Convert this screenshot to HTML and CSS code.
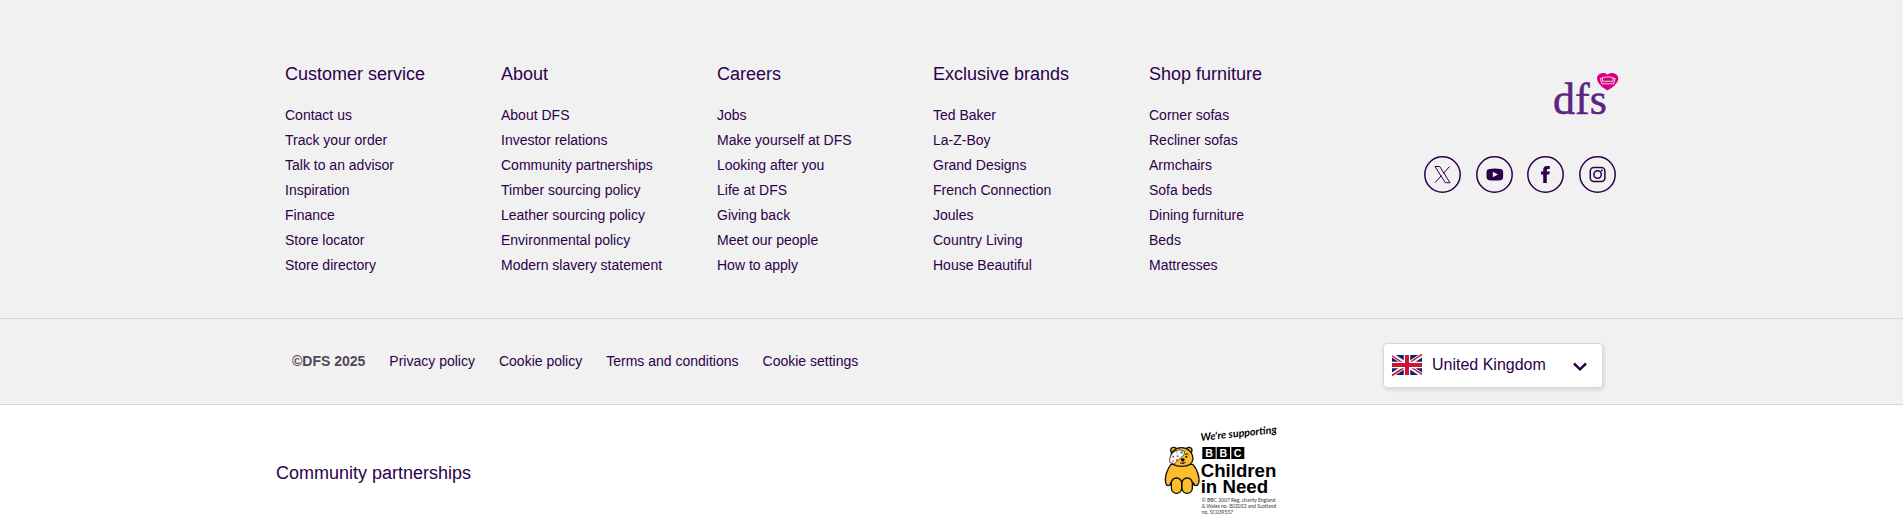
FILE: index.html
```html
<!DOCTYPE html>
<html lang="en-GB">
<head>
<meta charset="utf-8">
<meta name="viewport" content="width=device-width, initial-scale=1">
<title>DFS footer</title>
<link rel="stylesheet" href="styles.css">
</head>
<body>
<footer class="footer">
  <div class="container footer-main">
    <nav class="link-group" aria-labelledby="g1">
      <h2 class="title" id="g1">Customer service</h2>
      <ul class="links">
        <li><a href="#">Contact us</a></li>
        <li><a href="#">Track your order</a></li>
        <li><a href="#">Talk to an advisor</a></li>
        <li><a href="#">Inspiration</a></li>
        <li><a href="#">Finance</a></li>
        <li><a href="#">Store locator</a></li>
        <li><a href="#">Store directory</a></li>
      </ul>
    </nav>
    <nav class="link-group" aria-labelledby="g2">
      <h2 class="title" id="g2">About</h2>
      <ul class="links">
        <li><a href="#">About DFS</a></li>
        <li><a href="#">Investor relations</a></li>
        <li><a href="#">Community partnerships</a></li>
        <li><a href="#">Timber sourcing policy</a></li>
        <li><a href="#">Leather sourcing policy</a></li>
        <li><a href="#">Environmental policy</a></li>
        <li><a href="#">Modern slavery statement</a></li>
      </ul>
    </nav>
    <nav class="link-group" aria-labelledby="g3">
      <h2 class="title" id="g3">Careers</h2>
      <ul class="links">
        <li><a href="#">Jobs</a></li>
        <li><a href="#">Make yourself at DFS</a></li>
        <li><a href="#">Looking after you</a></li>
        <li><a href="#">Life at DFS</a></li>
        <li><a href="#">Giving back</a></li>
        <li><a href="#">Meet our people</a></li>
        <li><a href="#">How to apply</a></li>
      </ul>
    </nav>
    <nav class="link-group" aria-labelledby="g4">
      <h2 class="title" id="g4">Exclusive brands</h2>
      <ul class="links">
        <li><a href="#">Ted Baker</a></li>
        <li><a href="#">La-Z-Boy</a></li>
        <li><a href="#">Grand Designs</a></li>
        <li><a href="#">French Connection</a></li>
        <li><a href="#">Joules</a></li>
        <li><a href="#">Country Living</a></li>
        <li><a href="#">House Beautiful</a></li>
      </ul>
    </nav>
    <nav class="link-group" aria-labelledby="g5">
      <h2 class="title" id="g5">Shop furniture</h2>
      <ul class="links">
        <li><a href="#">Corner sofas</a></li>
        <li><a href="#">Recliner sofas</a></li>
        <li><a href="#">Armchairs</a></li>
        <li><a href="#">Sofa beds</a></li>
        <li><a href="#">Dining furniture</a></li>
        <li><a href="#">Beds</a></li>
        <li><a href="#">Mattresses</a></li>
      </ul>
    </nav>
    <div class="brand">
      <a class="logo" href="#" aria-label="DFS home">
        <svg width="66" height="44" viewBox="0 0 66 44">
          <text class="logo-text" x="0" y="41">dfs</text>
          <path class="heart" d="M54.500 17.500C51 15.500 44 10.500 44 5.500C44 .5 51-1.800 54.500 1.800C58-1.800 65.300.5 65.300 5.500C65.300 10.500 58 15.500 54.500 17.500Z"/>
          <path class="sofa" d="M49.500 4.500Q54.700 3.200 60 4.500V8.300H49.500ZM49.500 5.500H47.300L48.800 10.800H60.700L62.200 5.500H60"/>
        </svg>
      </a>
      <div class="social">
        <a href="#" aria-label="X">
          <svg viewBox="0 0 37 37">
            <circle class="line" cx="18.500" cy="18.500" r="17.700"/>
            <path class="thin" d="M11 10.500H15.700L26 26.700H21.300ZM25.500 10.500L19.400 17.500M17.400 19.500L11 26.700"/>
          </svg>
        </a>
        <a href="#" aria-label="YouTube">
          <svg viewBox="0 0 37 37">
            <circle class="line" cx="18.500" cy="18.500" r="17.700"/>
            <path fill-rule="evenodd" d="M13.500 12.900Q18.700 12.300 24.300 12.900Q27 13 27.100 15.800Q27.500 18.500 27.100 21.300Q27 24 24.300 24.200Q18.700 24.800 13.500 24.200Q10.700 24 10.600 21.300Q10.200 18.500 10.600 15.800Q10.700 13 13.500 12.900ZM16.800 15.700V21.300L22 18.500Z"/>
          </svg>
        </a>
        <a href="#" aria-label="Facebook">
          <svg viewBox="0 0 37 37">
            <circle class="line" cx="18.500" cy="18.500" r="17.700"/>
            <path d="M16.200 27V18.600H14V15.600H16.200V13.800Q16.200 9.900 20 9.900H22.800V13H21.200Q19.800 13 19.800 14.300V15.600H22.800L22.300 18.600H19.800V27Z"/>
          </svg>
        </a>
        <a href="#" aria-label="Instagram">
          <svg viewBox="0 0 37 37">
            <circle class="line" cx="18.500" cy="18.500" r="17.700"/>
            <rect class="line" x="11.300" y="11.500" width="14.600" height="14" rx="3.500"/>
            <circle class="line" cx="18.600" cy="18.500" r="3.700"/>
            <circle cx="22.900" cy="14.600" r="1"/>
          </svg>
        </a>
      </div>
    </div>
  </div>
  <div class="legal">
    <div class="container legal-row">
      <ul class="legal-links">
        <li class="copyright">©DFS 2025</li>
        <li><a href="#">Privacy policy</a></li>
        <li><a href="#">Cookie policy</a></li>
        <li><a href="#">Terms and conditions</a></li>
        <li><a href="#">Cookie settings</a></li>
      </ul>
      <div class="country">
        <select aria-label="Country">
          <option>United Kingdom</option>
          <option>Ireland</option>
        </select>
        <svg class="flag" viewBox="0 0 60 40" aria-hidden="true">
          <path fill="#0b2079" d="M0 0H60V40H0Z"/>
          <path stroke="#fff" stroke-width="8" d="M0 0L60 40M60 0L0 40"/>
          <path stroke="#cf1430" stroke-width="3" d="M0 1.500L28 20.200M32 20L60 38.600M60-1.300L32 17.500M28 22.500L0 41"/>
          <path stroke="#fff" stroke-width="13" d="M30 0V40M0 20H60"/>
          <path stroke="#cf1430" stroke-width="8" d="M30 0V40M0 20H60"/>
        </svg>
        <svg class="chevron" viewBox="0 0 14 9" aria-hidden="true"><path d="M1 1.500L7 7.300L13 1.500"/></svg>
      </div>
    </div>
  </div>
</footer>
<section class="community">
  <div class="container community-row">
    <h2 class="title">Community partnerships</h2>
    <a class="charity" href="#" aria-label="BBC Children in Need">
      <svg width="115" height="92" viewBox="45 39 345 276">
        <text class="script" transform="translate(156 93) rotate(-6)">We're supporting</text>
        <g class="bear">
          <circle cx="74" cy="121" r="9"/>
          <circle cx="120" cy="121" r="9"/>
          <path d="M66 163C54 178 46 203 50 219C54 231 62 228 65 220L72 240H126L134 220C137 229 145 230 149 219C153 203 144 176 131 163Z"/>
          <path d="M97 113C79 113 65 126 64 147C65 163 80 169 98 169C118 169 131 162 132 146C131 126 116 113 97 113Z"/>
          <rect x="67" y="204" width="31" height="46" rx="15"/>
          <rect x="99" y="204" width="31" height="46" rx="15"/>
        </g>
        <path class="bandage" d="M62 157C60 137 74 118 97 120L107 124L105 134L75 162Z"/>
        <path class="face" d="M93 158Q102 164 110 157M102 151V158M108 133Q114 129 118 134"/>
        <ellipse cx="101" cy="149" rx="6" ry="4"/>
        <circle cx="112" cy="140" r="3"/>
        <g>
          <circle cx="73" cy="140" r="3" fill="#e52b50"/><circle cx="86" cy="139" r="3" fill="#24a148"/>
          <circle cx="98" cy="127" r="4" fill="#20a7df"/><circle cx="72" cy="154" r="3" fill="#f28c28"/>
          <circle cx="83" cy="127" r="3" fill="#f6b722"/><circle cx="84" cy="150" r="3" fill="#e52b50"/>
        </g>
        <path d="M160 111H200V147H160ZM203 111H243V147H203ZM247 111H286V147H247Z"/>
        <g class="blocks">
          <text x="180" y="140">B</text><text x="223" y="140">B</text><text x="266" y="140">C</text>
        </g>
        <text class="charity-name" x="155" y="200">Children</text>
        <text class="charity-name" x="155" y="250">in Need</text>
        <g class="small-print">
          <text x="158" y="277">© BBC 2007 Reg. charity England</text>
          <text x="158" y="294">&amp; Wales no. 802052 and Scotland</text>
          <text x="158" y="311">no. SC039557</text>
        </g>
      </svg>
    </a>
  </div>
</section>
</body>
</html>
```
FILE: styles.css
```css
* {
  box-sizing: border-box;
}

body {
  margin: 0;
  background: #fff;
  color: #2d004b;
  font: 14px/20px "Liberation Sans", Arial, sans-serif;
}

a {
  color: inherit;
  text-decoration: none;
}

a:hover {
  text-decoration: underline;
}

ul {
  list-style: none;
  margin: 0;
  padding: 0;
}

svg {
  display: block;
  overflow: visible;
}

.container {
  max-width: 1351px;
  margin: 0 auto;
}

.title {
  margin: 0;
  font-size: 18px;
  line-height: 24px;
  font-weight: 400;
}

.footer {
  background: #f1f1f1;
}

.footer-main {
  display: grid;
  grid-template-columns: repeat(5, 108fr) 127fr;
  padding: 62px 8px 40px 9px;
}

.links {
  margin-top: 17px;
  line-height: 25px;
}

.brand {
  display: flex;
  flex-direction: column;
  align-items: flex-end;
  padding-top: 11px;
}

.logo-text {
  fill: #5c2482;
  stroke: #5c2482;
  stroke-width: 0.5;
  font: 44px "Liberation Serif", serif;
}

.heart {
  fill: #d6007f;
}

.sofa {
  fill: none;
  stroke: #fff;
  stroke-width: 0.8;
}

.social {
  display: flex;
  justify-content: space-between;
  width: 192px;
  margin: 39px 3px 0 0;
}

.social svg {
  width: 37px;
  height: 37px;
  fill: #2d004b;
}

.social .line,
.social .thin {
  fill: none;
  stroke: #2d004b;
  stroke-width: 1.5;
}

.social .thin {
  stroke-width: 1;
}

.legal {
  border: solid #d8d8d8;
  border-width: 1px 0;
}

.legal-row {
  display: flex;
  justify-content: space-between;
  align-items: flex-start;
  padding: 24px 24px 16px 16px;
}

.legal-links {
  display: flex;
  gap: 24px;
  padding-top: 8px;
}

.copyright {
  color: #51475b;
  font-weight: 700;
}

.country {
  display: grid;
  grid-template-columns: 48px 1fr 30px;
  align-items: center;
  width: 220px;
}

.country select {
  grid-area: 1 / 1 / 2 / 4;
  appearance: none;
  height: 45px;
  padding: 0 30px 2px 48px;
  border: 1px solid #d8d8d8;
  border-radius: 4px;
  background: #fff;
  box-shadow: 1px 2px 4px rgba(0, 0, 0, 0.12);
  color: inherit;
  font: 16px "Liberation Sans", Arial, sans-serif;
}

.flag,
.chevron {
  z-index: 1;
  grid-row: 1;
  pointer-events: none;
}

.flag {
  grid-column: 1;
  width: 30px;
  height: 20px;
  margin: 0 0 2px 9px;
}

.chevron {
  grid-column: 3;
  width: 14px;
  height: 9px;
  margin-top: 2px;
  fill: none;
  stroke: #2d004b;
  stroke-width: 2.5;
}

.community-row {
  display: grid;
  grid-template-columns: 23fr 12fr;
  align-items: center;
  padding: 18px 0 17px;
}

.community .title {
  padding-top: 8px;
}

.script {
  font: italic 700 32px Lato, sans-serif;
}

.bear {
  fill: #fdbd2c;
  stroke: #111;
  stroke-width: 4;
}

.bandage {
  fill: #fff;
  stroke: #111;
  stroke-width: 2;
}

.face {
  fill: none;
  stroke: #111;
  stroke-width: 3;
}

.blocks {
  fill: #fff;
  font: 700 32px "Liberation Sans", Arial, sans-serif;
  text-anchor: middle;
}

.charity-name {
  font: 700 56px "Liberation Sans", Arial, sans-serif;
}

.small-print {
  fill: #333;
  font: 15px Lato, sans-serif;
}
```
